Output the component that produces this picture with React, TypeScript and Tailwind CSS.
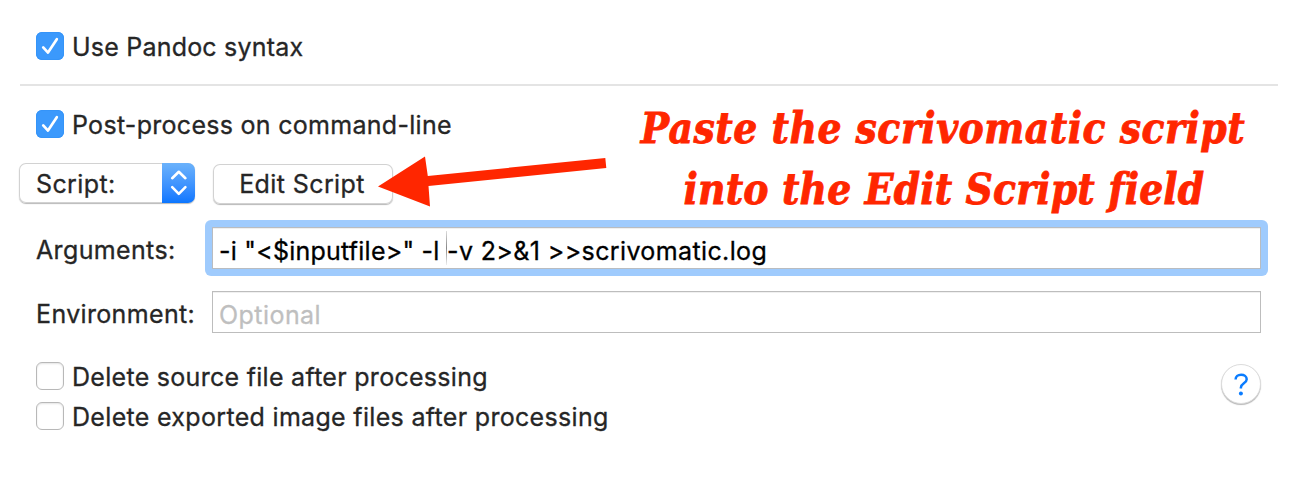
import type { ReactNode } from "react";

function Checkbox({ checked = false, children, spacing }: { checked?: boolean; children: ReactNode; spacing: string }) {
  return (
    <label className="flex h-7 items-start">
      {checked ? (
        <span className="flex size-7 shrink-0 items-center justify-center rounded-[6px] bg-[#3b99fc] shadow-[inset_0_0_0_1px_#3594f8]">
          <svg width="28" height="28" viewBox="0 0 28 28" fill="none">
            <path d="M7.2 15.4 L12 20.6 L20.8 7.2" stroke="white" strokeWidth="2.7" strokeLinecap="round" strokeLinejoin="round" />
          </svg>
        </span>
      ) : (
        <span className="size-7 shrink-0 rounded-[6px] border border-[#b8b8b8] bg-white shadow-[inset_0_1px_2px_#e4e4e4]" />
      )}
      <span className={`ml-2 leading-[30px] whitespace-pre text-[#262626] ${spacing}`}>{children}</span>
    </label>
  );
}

function Annotation() {
  return (
    <>
      <svg className="absolute top-[140px] left-[370px]" width="260" height="80" viewBox="0 0 260 80">
        <path d="M8 46.5 L55 16.5 L57.8 36 L235.3 18 L236.3 28 L58.5 46 L60 66.5 Z" fill="#ff2600" />
      </svg>
      <div className="absolute top-[98px] left-[632px] w-[622px] text-center font-['DejaVu_Serif_Condensed','DejaVu_Serif',serif] text-[42px] leading-[61px] font-bold whitespace-nowrap text-[#ff2600] italic [-webkit-text-stroke:0.8px_#ff2600] [font-stretch:condensed]">
        <div className="tracking-[0.5px]">Paste the scrivomatic script</div>
        <div className="pl-0.5 tracking-[0.15px]">into the Edit Script field</div>
      </div>
    </>
  );
}

export default function App() {
  return (
    <main className="relative flex h-[484px] w-[1296px] flex-col overflow-hidden bg-white font-['Inter',sans-serif] text-[25px] text-[#262626] [-webkit-text-stroke:0.3px_currentColor]">
      <div className="mt-8 ml-9">
        <Checkbox checked spacing="tracking-[0.21px]">Use Pandoc syntax</Checkbox>
      </div>
      <hr className="mt-6 mr-[18px] ml-5 h-0.5 border-0 bg-[#e4e4e4]" />
      <div className="mt-6 ml-9">
        <Checkbox checked spacing="tracking-[0.29px]">Post-process on command-line</Checkbox>
      </div>

      <div className="mt-[25px] ml-[19px] flex h-[42px] items-start">
        <button className="flex h-10 w-[176px] overflow-hidden rounded-[7px] bg-white text-left shadow-[inset_0_0_0_1px_#d2d2d2,0_1px_1px_#b8b8b8]">
          <span className="w-[143px] pl-[17px] leading-[42px] tracking-[0.39px]">Script:</span>
          <span className="h-10 w-[33px] bg-linear-to-b from-[#6bb2fb] to-[#0a76ff]">
            <svg width="33" height="40" viewBox="0 0 33 40" fill="none" stroke="white" strokeWidth="2.6" strokeLinecap="round" strokeLinejoin="round">
              <path d="M10.2 15.2 L16.8 8.8 L23.4 15.2" />
              <path d="M10.2 24.2 L16.8 30.8 L23.4 24.2" />
            </svg>
          </span>
        </button>
        <button className="mt-px ml-[18px] h-10 w-[180px] rounded-[7px] bg-white pr-[2px] text-center leading-10 tracking-[0.4px] shadow-[inset_0_0_0_1px_#d2d2d2,0_1px_1px_#b8b8b8]">
          Edit Script
        </button>
      </div>

      <div className="mt-[15px] ml-9 flex h-14">
        <span className="w-[169px] pt-[9px] leading-[42px] tracking-[0.36px]">Arguments:</span>
        <div className="w-[1063px] rounded-[6px] bg-[#9fcbfd] p-[7px]">
          <div className="flex h-[42px] border border-[#b9bcc0] bg-white pt-[3px] pl-[6px] leading-10 whitespace-pre text-black shadow-[inset_0_1px_0_#f0f0f0]">
            <span className="w-[227px] tracking-[0.23px]">{'-i "<$inputfile>" -l'}</span>
            <span className="h-[34px] w-px bg-linear-to-b from-[#dddddd] via-[#888888] to-[#eeeeee]" />
            <span className="tracking-[0.38px]">{"-v 2>&1 >>scrivomatic.log"}</span>
          </div>
        </div>
      </div>

      <div className="mt-[15px] ml-9 flex h-[42px]">
        <span className="w-[176px] pt-0.5 leading-[42px] tracking-[0.35px]">Environment:</span>
        <div className="h-[42px] w-[1049px] border border-[#bdbdbd] pt-[3px] pl-[6px] leading-10 tracking-[0.45px] text-[#bfbfbf] shadow-[inset_0_1px_0_#f0f0f0]">Optional</div>
      </div>

      <div className="mt-[29px] mr-[35px] ml-9 flex items-start justify-between">
        <div className="flex flex-col gap-3">
          <Checkbox spacing="tracking-[0.29px]">Delete source file after processing</Checkbox>
          <Checkbox spacing="tracking-[0.32px]">Delete exported image files after processing</Checkbox>
        </div>
        <button className="mt-0.5 flex size-10 items-center justify-center rounded-full border border-[#dcdcdc] bg-white shadow-[0_1px_1px_#b8b8b8]">
          <svg width="16" height="24" viewBox="0 0 16 24" fill="none">
            <path d="M2.6 7.4 C2.6 4.4 5 2.7 8.1 2.7 C11.2 2.7 13.7 4.4 13.7 7.2 C13.7 11.2 7.9 11.2 7.9 15.4 V16.4" stroke="#0a7cff" strokeWidth="2.5" />
            <circle cx="7.9" cy="21.4" r="2" fill="#0a7cff" />
          </svg>
        </button>
      </div>

      <Annotation />
    </main>
  );
}
